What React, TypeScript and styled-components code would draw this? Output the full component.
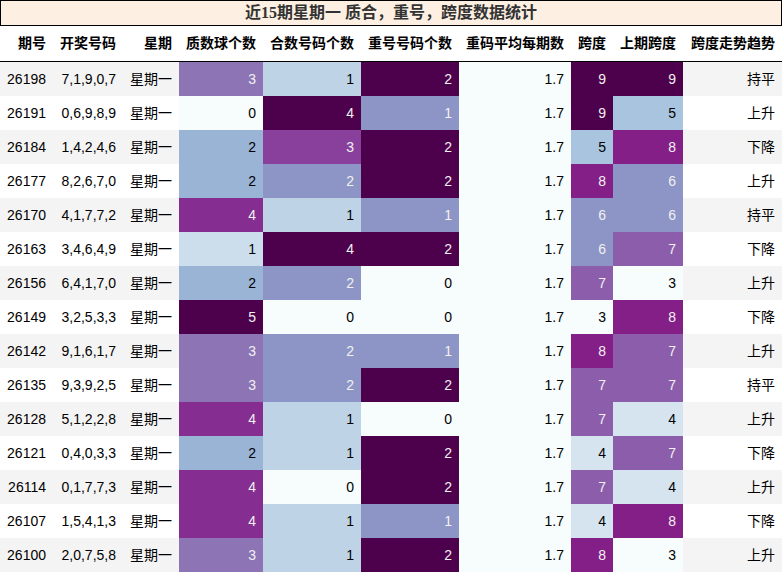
import React from "react";
import styled, { createGlobalStyle } from "styled-components";

const GlobalStyle = createGlobalStyle`
  html, body { margin: 0; padding: 0; background: #ffffff; }
  body { font-family: "Liberation Sans", "Noto Sans CJK SC", sans-serif; }
`;

const BUPU = [
  "#f7fcfd", "#e0ecf4", "#bfd3e6", "#9ebcda", "#8c96c6",
  "#8c6bb1", "#88419d", "#810f7c", "#4d004b",
];

const hexToRgb = (h: string) => [
  parseInt(h.slice(1, 3), 16),
  parseInt(h.slice(3, 5), 16),
  parseInt(h.slice(5, 7), 16),
];

function bupu(x: number): number[] {
  const idx = Math.min(255, Math.floor(x * 256));
  const v = idx / 255;
  const pos = v * (BUPU.length - 1);
  const i = Math.min(BUPU.length - 2, Math.floor(pos));
  const t = pos - i;
  const a = hexToRgb(BUPU[i]);
  const b = hexToRgb(BUPU[i + 1]);
  return a.map((c, k) => Math.round(c + (b[k] - c) * t));
}

function luminance(rgb: number[]) {
  const f = (c: number) => {
    const x = c / 255;
    return x <= 0.04045 ? x / 12.92 : Math.pow((x + 0.055) / 1.055, 2.4);
  };
  return 0.2126 * f(rgb[0]) + 0.7152 * f(rgb[1]) + 0.0722 * f(rgb[2]);
}

type Row = [string, string, number, number, number, number, number, number, string];

const rows: Row[] = [
  ["26198", "7,1,9,0,7", 3, 1, 2, 1.7, 9, 9, "持平"],
  ["26191", "0,6,9,8,9", 0, 4, 1, 1.7, 9, 5, "上升"],
  ["26184", "1,4,2,4,6", 2, 3, 2, 1.7, 5, 8, "下降"],
  ["26177", "8,2,6,7,0", 2, 2, 2, 1.7, 8, 6, "上升"],
  ["26170", "4,1,7,7,2", 4, 1, 1, 1.7, 6, 6, "持平"],
  ["26163", "3,4,6,4,9", 1, 4, 2, 1.7, 6, 7, "下降"],
  ["26156", "6,4,1,7,0", 2, 2, 0, 1.7, 7, 3, "上升"],
  ["26149", "3,2,5,3,3", 5, 0, 0, 1.7, 3, 8, "下降"],
  ["26142", "9,1,6,1,7", 3, 2, 1, 1.7, 8, 7, "上升"],
  ["26135", "9,3,9,2,5", 3, 2, 2, 1.7, 7, 7, "持平"],
  ["26128", "5,1,2,2,8", 4, 1, 0, 1.7, 7, 4, "上升"],
  ["26121", "0,4,0,3,3", 2, 1, 2, 1.7, 4, 7, "下降"],
  ["26114", "0,1,7,7,3", 4, 0, 2, 1.7, 7, 4, "上升"],
  ["26107", "1,5,4,1,3", 4, 1, 1, 1.7, 4, 8, "下降"],
  ["26100", "2,0,7,5,8", 3, 1, 2, 1.7, 8, 3, "上升"],
];

const headers = [
  "期号", "开奖号码", "星期", "质数球个数", "合数号码个数", "重号号码个数",
  "重码平均每期数", "跨度", "上期跨度", "跨度走势趋势",
];
const widths = [53, 70, 56, 84, 98, 98, 112, 42, 70, 99];

const gradCols = [2, 3, 4, 5, 6, 7];
const ranges: Record<number, [number, number]> = {};
gradCols.forEach((c) => {
  const vals = rows.map((r) => r[c] as number);
  ranges[c] = [Math.min(...vals), Math.max(...vals)];
});

const Page = styled.div`
  width: 782px;
`;

const Title = styled.div`
  height: 24px;
  border: 1px solid #000000;
  background: #fdf0e2;
  color: #333333;
  font-family: "Liberation Serif", "Noto Sans CJK SC", serif;
  font-weight: bold;
  font-size: 16px;
  line-height: 24px;
  text-align: center;
`;

const Table = styled.table`
  width: 782px;
  table-layout: fixed;
  border-collapse: separate;
  border-spacing: 0;
  font-size: 14px;
`;

const HeadCell = styled.th`
  padding: 0 7px 0 0;
  line-height: 35px;
  text-align: right;
  font-weight: bold;
  color: #000000;
  white-space: nowrap;
  border-bottom: 1px solid #000000;
`;

const BodyRow = styled.tr<{ $striped: boolean }>`
  background: ${(p) => (p.$striped ? "#f4f4f4" : "#ffffff")};
`;

const Cell = styled.td<{ $bg?: string; $fg?: string }>`
  padding: 0 7px 0 0;
  line-height: 34px;
  text-align: right;
  white-space: nowrap;
  color: ${(p) => p.$fg ?? "#000000"};
  background: ${(p) => p.$bg ?? "transparent"};
`;

export default function App() {
  return (
    <Page>
      <GlobalStyle />
      <Title>近15期星期一 质合，重号，跨度数据统计</Title>
      <Table>
        <colgroup>
          {widths.map((w, i) => (
            <col key={i} style={{ width: w }} />
          ))}
        </colgroup>
        <thead>
          <tr>
            {headers.map((h) => (
              <HeadCell key={h}>{h}</HeadCell>
            ))}
          </tr>
        </thead>
        <tbody>
          {rows.map((r, ri) => (
            <BodyRow key={r[0]} $striped={ri % 2 === 0}>
              <Cell>{r[0]}</Cell>
              <Cell>{r[1]}</Cell>
              <Cell>星期一</Cell>
              {gradCols.map((c) => {
                const v = r[c] as number;
                const [lo, hi] = ranges[c];
                const x = hi === lo ? 0 : (v - lo) / (hi - lo);
                const rgb = bupu(x);
                const dark = luminance(rgb) < 0.408;
                return (
                  <Cell
                    key={c}
                    $bg={`rgb(${rgb[0]}, ${rgb[1]}, ${rgb[2]})`}
                    $fg={dark ? "#f1f1f1" : "#000000"}
                  >
                    {c === 5 ? v.toFixed(1) : v}
                  </Cell>
                );
              })}
              <Cell>{r[8]}</Cell>
            </BodyRow>
          ))}
        </tbody>
      </Table>
    </Page>
  );
}
